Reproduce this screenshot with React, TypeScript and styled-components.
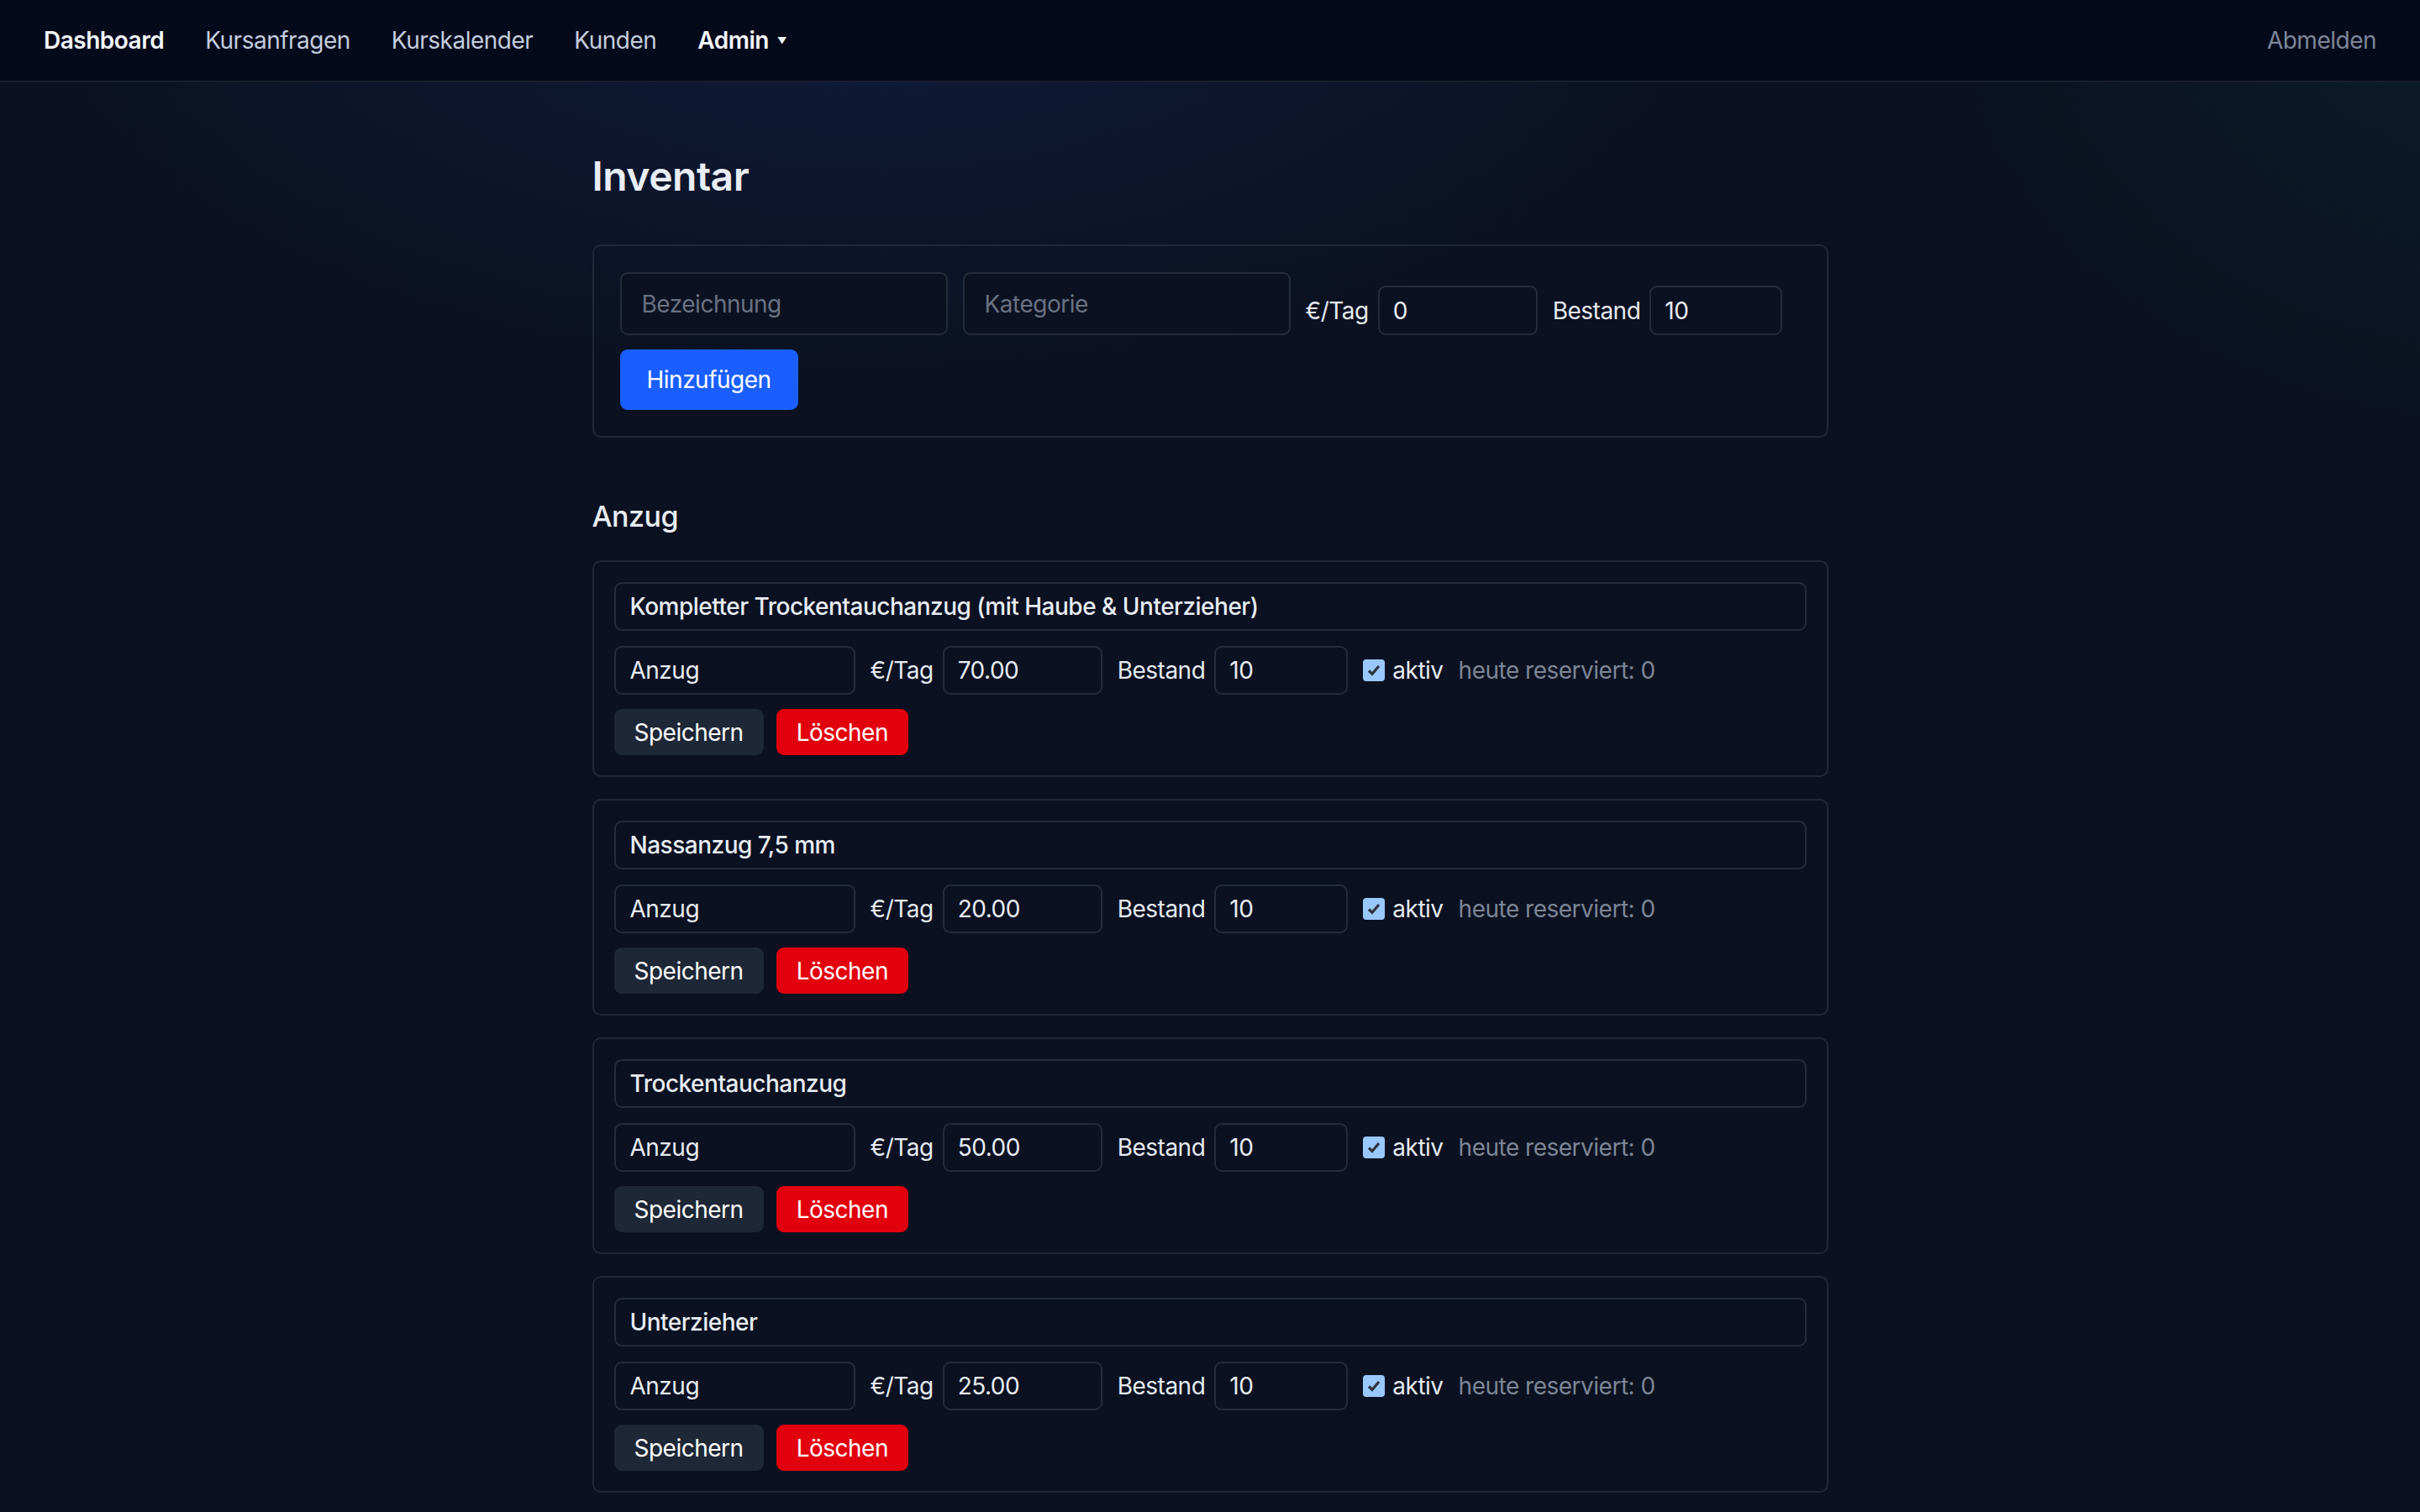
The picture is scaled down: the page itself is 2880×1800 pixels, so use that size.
import styled, { createGlobalStyle } from 'styled-components';

const GlobalStyle = createGlobalStyle`
  html, body {
    margin: 0;
    padding: 0;
  }

  body {
    min-height: 100vh;
    font-family: Inter, "Noto Sans", "Liberation Sans", sans-serif;
    letter-spacing: -0.5px;
    color: #e6eaf2;
    background:
      radial-gradient(ellipse 1500px 760px at 36% -4%, rgba(29, 58, 140, 0.28), transparent 70%),
      radial-gradient(ellipse 1000px 800px at 104% -2%, rgba(20, 110, 100, 0.14), transparent 70%),
      #0b1120;
  }

  * {
    box-sizing: border-box;
  }
`;

const Nav = styled.nav`
  height: 98px;
  display: flex;
  align-items: center;
  gap: 49px;
  padding: 0 52px;
  background: #050a1b;
  border-bottom: 2px solid #171e2d;
  font-size: 28px;
`;

const NavLink = styled.a<{ $active?: boolean }>`
  color: ${({ $active }) => ($active ? '#f4f6fb' : '#c3cddd')};
  font-weight: ${({ $active }) => ($active ? 600 : 400)};
  text-decoration: none;
  display: flex;
  align-items: center;
  cursor: pointer;
`;

const Caret = styled.span`
  font-size: 11px;
  margin-left: 10px;
  color: #f4f6fb;
`;

const Logout = styled.a`
  margin-left: auto;
  color: #7c8699;
  text-decoration: none;
  cursor: pointer;
`;

const Main = styled.main`
  max-width: 1471px;
  margin: 0 auto;
  padding-top: 83px;
`;

const Title = styled.h1`
  margin: 0 0 52px;
  font-size: 48px;
  line-height: 58px;
  font-weight: 600;
  color: #e9edf5;
`;

const Card = styled.section<{ $pad: number }>`
  border: 2px solid #202838;
  border-radius: 10px;
  padding: ${({ $pad }) => $pad}px;
`;

const FormRow = styled.div`
  display: flex;
  flex-wrap: wrap;
  align-items: flex-end;
  gap: 17px 18px;
`;

const Input = styled.input<{ $w?: number; $h: number; $bold?: boolean; $px: number }>`
  width: ${({ $w }) => ($w ? `${$w}px` : '100%')};
  height: ${({ $h }) => $h}px;
  padding: 0 ${({ $px }) => $px}px;
  background: #0b1121;
  border: 2px solid #242c3b;
  border-radius: 9px;
  color: #e8ecf3;
  font-family: inherit;
  letter-spacing: inherit;
  font-size: 28px;
  font-weight: ${({ $bold }) => ($bold ? 500 : 400)};
  outline: none;

  &::placeholder {
    color: #6a7282;
  }
`;

const Field = styled.label`
  display: flex;
  align-items: center;
  gap: 11px;
  font-size: 28px;
  color: #e6eaf2;
`;

const Button = styled.button<{ $variant: 'primary' | 'neutral' | 'danger' }>`
  height: ${({ $variant }) => ($variant === 'primary' ? 72 : 55)}px;
  padding: 0 ${({ $variant }) => ($variant === 'primary' ? 32 : 24)}px;
  border: none;
  border-radius: 9px;
  font-family: inherit;
  letter-spacing: inherit;
  font-size: 28px;
  color: #ffffff;
  cursor: pointer;
  background: ${({ $variant }) =>
    $variant === 'primary' ? '#1a5ffe' : $variant === 'danger' ? '#e3000d' : '#1e2736'};
`;

const SectionTitle = styled.h2`
  margin: 73px 0 32px;
  font-size: 34px;
  line-height: 41px;
  font-weight: 500;
  color: #e9edf5;
`;

const ItemList = styled.div`
  display: flex;
  flex-direction: column;
  gap: 26px;
  padding-bottom: 40px;
`;

const ItemBody = styled.div`
  display: flex;
  flex-direction: column;
  gap: 17px;
`;

const NameField = styled(Input)`
  margin-bottom: 1px;
`;

const Row = styled.div`
  display: flex;
  align-items: center;
  gap: 18px;
`;

const ButtonRow = styled.div`
  display: flex;
  gap: 15px;
`;

const CheckLabel = styled.label`
  display: flex;
  align-items: center;
  gap: 9px;
  font-size: 28px;
  color: #e6eaf2;
`;

const CheckBox = styled.span`
  width: 26px;
  height: 26px;
  border-radius: 4px;
  background: #99c8ff;
  display: flex;
  align-items: center;
  justify-content: center;
`;

const Muted = styled.span`
  font-size: 28px;
  color: #7d8596;
`;

type Item = { name: string; category: string; price: string; stock: string };

const items: Item[] = [
  { name: 'Kompletter Trockentauchanzug (mit Haube & Unterzieher)', category: 'Anzug', price: '70.00', stock: '10' },
  { name: 'Nassanzug 7,5 mm', category: 'Anzug', price: '20.00', stock: '10' },
  { name: 'Trockentauchanzug', category: 'Anzug', price: '50.00', stock: '10' },
  { name: 'Unterzieher', category: 'Anzug', price: '25.00', stock: '10' },
];

const ItemCard = ({ item }: { item: Item }) => (
  <Card $pad={24}>
    <ItemBody>
      <NameField $h={58} $px={17} $bold defaultValue={item.name} />
      <Row>
        <Input $w={287} $h={58} $px={17} defaultValue={item.category} />
        <Field>
          €/Tag
          <Input $w={190} $h={58} $px={16} defaultValue={item.price} />
        </Field>
        <Field>
          Bestand
          <Input $w={159} $h={58} $px={16} defaultValue={item.stock} />
        </Field>
        <CheckLabel>
          <CheckBox>
            <svg width="20" height="20" viewBox="0 0 20 20">
              <path d="M4 10.5 L8 14.5 L16 5" fill="none" stroke="#2f3338" strokeWidth="3.2" />
            </svg>
          </CheckBox>
          aktiv
        </CheckLabel>
        <Muted>heute reserviert: 0</Muted>
      </Row>
      <ButtonRow>
        <Button $variant="neutral">Speichern</Button>
        <Button $variant="danger">Löschen</Button>
      </ButtonRow>
    </ItemBody>
  </Card>
);

export default function App() {
  return (
    <>
      <GlobalStyle />
      <Nav>
        <NavLink $active>Dashboard</NavLink>
        <NavLink>Kursanfragen</NavLink>
        <NavLink>Kurskalender</NavLink>
        <NavLink>Kunden</NavLink>
        <NavLink $active>
          Admin
          <Caret>▼</Caret>
        </NavLink>
        <Logout>Abmelden</Logout>
      </Nav>

      <Main>
        <Title>Inventar</Title>

        <Card $pad={31}>
          <FormRow>
            <Input $w={390} $h={75} $px={24} placeholder="Bezeichnung" />
            <Input $w={390} $h={75} $px={24} placeholder="Kategorie" />
            <Field>
              €/Tag
              <Input $w={190} $h={59} $px={16} defaultValue="0" />
            </Field>
            <Field>
              Bestand
              <Input $w={158} $h={59} $px={16} defaultValue="10" />
            </Field>
            <Button $variant="primary">Hinzufügen</Button>
          </FormRow>
        </Card>

        <SectionTitle>Anzug</SectionTitle>

        <ItemList>
          {items.map((item) => (
            <ItemCard key={item.name} item={item} />
          ))}
        </ItemList>
      </Main>
    </>
  );
}
